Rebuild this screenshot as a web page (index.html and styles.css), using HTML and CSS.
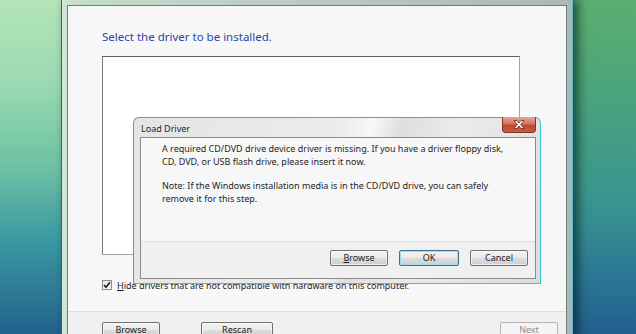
FILE: index.html
```html
<!DOCTYPE html>
<html lang="en">
<head>
    <meta charset="UTF-8">
    <meta name="viewport" content="width=device-width, initial-scale=1.0">
    <title>Load Driver</title>
    <link rel="stylesheet" href="styles.css">
</head>
<body>
    <div class="wizard">
        <div class="wizard-content">
            <div class="wizard-body">
                <h1 class="wizard-title">Select the driver to be installed.</h1>
                <div class="driver-list"></div>
                <label class="check-row">
                    <span class="checkbox">
                        <svg width="8" height="8" viewBox="0 0 8 8"><path d="M1 4 L3 6.2 L7 1.2" fill="none" stroke="#1c1c1c" stroke-width="1.6"/></svg>
                    </span>
                    <span><u>H</u>ide drivers that are not compatible with hardware on this computer.</span>
                </label>
            </div>
            <div class="wizard-footer">
                <button class="btn">Browse</button>
                <button class="btn btn-rescan">Rescan</button>
                <button class="btn btn-next" disabled>Next</button>
            </div>
        </div>
    </div>

    <div class="dialog">
        <div class="dialog-title">Load Driver</div>
        <div class="dialog-close">
            <svg width="12" height="9" viewBox="0 0 12 9"><path d="M1 0.5 H4 L6 3 L8 0.5 H11 L7.6 4.5 L11 8.5 H8 L6 6 L4 8.5 H1 L4.4 4.5 Z" fill="#ffffff" stroke="#6a2417" stroke-width="0.8"/></svg>
        </div>
        <div class="dialog-panel">
            <div class="dialog-message">
                <p>A required CD/DVD drive device driver is missing. If you have a driver floppy disk, CD, DVD, or USB flash drive, please insert it now.</p>
                <p>Note: If the Windows installation media is in the CD/DVD drive, you can safely remove it for this step.</p>
            </div>
            <div class="dialog-buttons">
                <button class="btn btn-browse"><u>B</u>rowse</button>
                <button class="btn btn-ok">OK</button>
                <button class="btn">Cancel</button>
            </div>
        </div>
    </div>
</body>
</html>
```

FILE: styles.css
```css
body {
    margin: 0;
    width: 636px;
    height: 334px;
    overflow: hidden;
    position: relative;
    font-family: "Noto Sans", "Open Sans", sans-serif;
    background:
        linear-gradient(to bottom, #5cae70 0%, #4aa37c 30%, #3a9590 60%, #2a7596 85%, #23608f 100%) right top / 64px 100% no-repeat,
        linear-gradient(to bottom, #b6e4b8 0%, #9adab2 25%, #6ec2a4 50%, #3b98a2 72%, #22638c 100%);
}

/* main setup window */
.wizard {
    position: absolute;
    left: 61px;
    top: -1px;
    width: 512px;
    height: 340px;
    box-sizing: border-box;
    border: 1px solid #4d5c5a;
    border-right-color: #5cb9cf;
    padding: 5px 5px 0 5px;
    background: linear-gradient(to right, #d2e7d5 0, #c4dccb 20px, #aab8ba 100%);
    box-shadow: 5px 0 10px rgba(0, 25, 20, 0.65);
}

.wizard-content {
    height: 100%;
    box-sizing: border-box;
    border: 1px solid #6f7d7d;
    background: #f7f7f7;
    display: flex;
    flex-direction: column;
}

.wizard-body {
    padding: 21px 0 19px 34px;
}

.wizard-title {
    margin: 0;
    font-size: 11.5px;
    line-height: 20px;
    font-weight: normal;
    color: #2a46a8;
}

.driver-list {
    margin-top: 9px;
    width: 418px;
    height: 199px;
    box-sizing: border-box;
    border: 1px solid #a4a4a4;
    border-top-color: #5e5e5e;
    border-left-color: #7c7c7c;
    background: #ffffff;
}

.check-row {
    margin-top: 23px;
    height: 14px;
    display: flex;
    align-items: center;
    gap: 5px;
    font-size: 9px;
    color: #1e1e1e;
}

.checkbox {
    width: 10px;
    height: 10px;
    box-sizing: border-box;
    border: 1px solid #8e8f8f;
    background: linear-gradient(#e6e6e6, #fbfbfb);
    display: flex;
    align-items: center;
    justify-content: center;
}

.wizard-footer {
    flex: 1;
    border-top: 1px solid #dedede;
    background: #f0f0f0;
    padding: 10px 8px 0 34px;
    display: flex;
    align-items: flex-start;
}

/* buttons */
.btn {
    font-family: inherit;
    font-size: 9px;
    color: #1a1a1a;
    width: 58px;
    height: 16px;
    padding: 0;
    line-height: 14px;
    border: 1px solid #707070;
    border-radius: 2px;
    background: linear-gradient(#f2f2f2 0%, #ebebeb 48%, #dcdcdc 52%, #cfcfcf 100%);
    box-shadow: inset 0 0 0 1px rgba(255, 255, 255, 0.6);
}

.btn-rescan {
    width: 72px;
    margin-left: 41px;
}

.btn-next {
    margin-left: auto;
    color: #8f8f8f;
    border-color: #b2b6b8;
    background: #f4f4f4;
    box-shadow: none;
}

/* load driver dialog */
.dialog {
    position: absolute;
    left: 133px;
    top: 117px;
    width: 408px;
    height: 167px;
    box-sizing: border-box;
    border: 1px solid #8a8f94;
    border-right-color: #3cc3dc;
    border-bottom-color: #3cc3dc;
    border-radius: 6px 6px 0 0;
    padding: 0 4px 4px 6px;
    background: linear-gradient(110deg, #e4e4e4 0%, #ececec 45%, #f8f8f8 52%, #dedede 58%, #ebebeb 70%, #dcdcdc 100%);
    display: flex;
    flex-direction: column;
}

.dialog-title {
    height: 19px;
    line-height: 22px;
    padding-left: 1px;
    font-size: 9px;
    color: #1e1e1e;
}

.dialog-close {
    position: absolute;
    top: -1px;
    right: 4px;
    width: 34px;
    height: 16px;
    box-sizing: border-box;
    border: 1px solid #7d3526;
    border-top: none;
    border-radius: 0 0 4px 4px;
    background: linear-gradient(#e3a596 0%, #d47560 45%, #c04a33 55%, #c85a40 100%);
    display: flex;
    align-items: center;
    justify-content: center;
}

.dialog-panel {
    flex: 1;
    border: 1px solid #8b8b8b;
    background: #f7f7f7;
    display: flex;
    flex-direction: column;
}

.dialog-message {
    flex: 1;
    padding: 4px 10px 0 21px;
    font-size: 9px;
    line-height: 13px;
    color: #1e1e1e;
}

.dialog-message p {
    margin: 0 0 11px;
    max-width: 346px;
}

.dialog-buttons {
    height: 37px;
    box-sizing: border-box;
    border-top: 1px solid #dfdfdf;
    background: #f0f0f0;
    padding: 8px 7px 0 0;
    display: flex;
    justify-content: flex-end;
    align-items: flex-start;
    gap: 11px;
}

.btn-ok {
    width: 60px;
    border-color: #3d6f8f;
    box-shadow: inset 0 0 0 1px #9fdcf2;
}
```
